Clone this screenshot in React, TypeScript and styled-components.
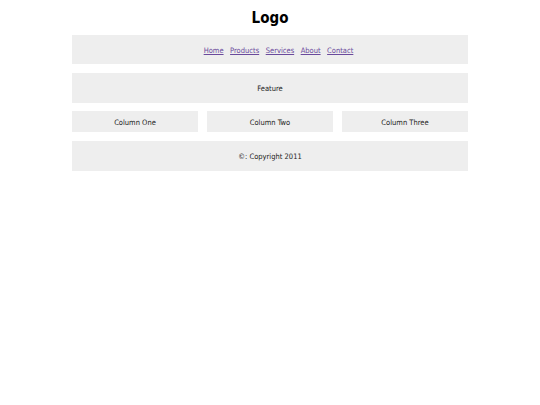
import React from 'react';
import styled, { createGlobalStyle } from 'styled-components';

const GlobalStyle = createGlobalStyle`
  html, body {
    margin: 0;
    padding: 0;
    background: #fff;
  }
  body {
    font-family: 'DejaVu Sans Condensed', 'DejaVu Sans', Verdana, sans-serif;
    color: #222;
  }
`;

const Page = styled.div`
  width: 396px;
  margin: 0 auto;
  display: flex;
  flex-direction: column;
  gap: 8.6px;
`;

const Logo = styled.h1`
  margin: 0 0 -8.6px;
  height: 34.8px;
  padding-top: 9px;
  box-sizing: border-box;
  font-size: 15px;
  font-weight: bold;
  text-align: center;
  color: #000;
  line-height: 18px;
`;

const Panel = styled.div<{ tall?: boolean }>`
  background: #eeeeee;
  height: ${({ tall }) => (tall ? 29.6 : 21.2)}px;
  box-sizing: border-box;
  padding-top: 1.5px;
  display: flex;
  align-items: center;
  justify-content: center;
  font-size: 7.5px;
`;

const Nav = styled(Panel)`
  gap: 6.5px;
  padding-left: 17px;
`;

const NavLink = styled.a`
  color: #6a4a9c;
  text-decoration: underline;
`;

const Columns = styled.div`
  display: grid;
  grid-template-columns: repeat(3, 1fr);
  gap: 9px;
`;

const links = ['Home', 'Products', 'Services', 'About', 'Contact'];

const App = () => (
  <>
    <GlobalStyle />
    <Page>
      <Logo>Logo</Logo>
      <Nav tall>
        {links.map((l) => (
          <NavLink key={l} href="#">
            {l}
          </NavLink>
        ))}
      </Nav>
      <Panel tall>Feature</Panel>
      <Columns>
        <Panel>Column One</Panel>
        <Panel>Column Two</Panel>
        <Panel>Column Three</Panel>
      </Columns>
      <Panel tall>©: Copyright 2011</Panel>
    </Page>
  </>
);

export default App;
